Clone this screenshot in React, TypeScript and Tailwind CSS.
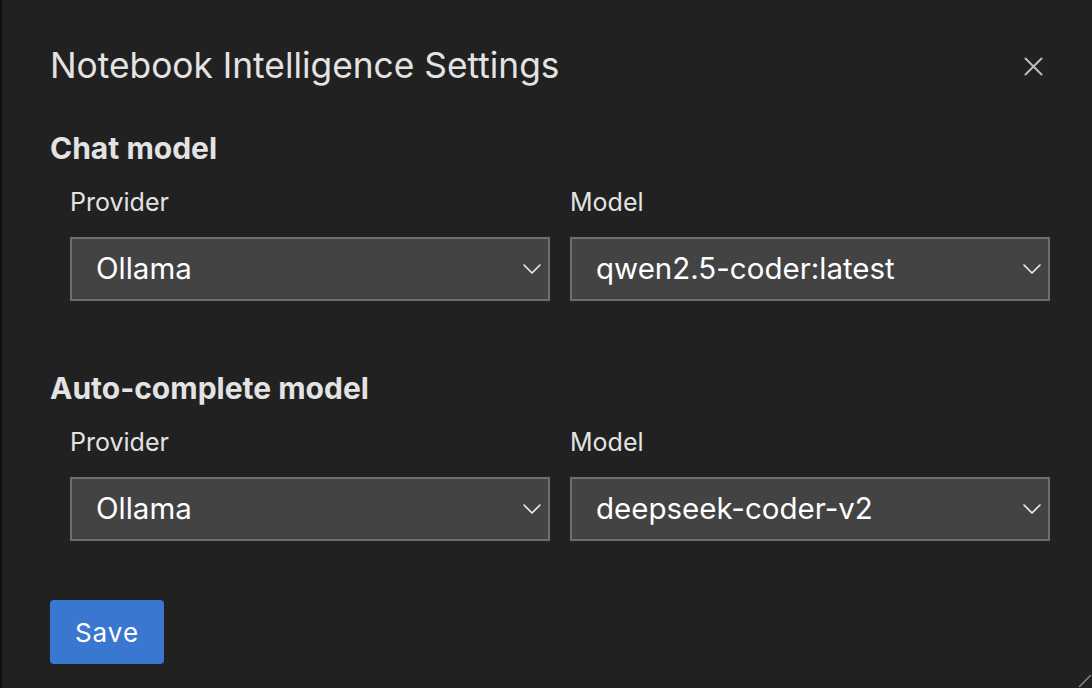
import { useState } from "react";

type ModelSection = {
  title: string;
  provider: string;
  model: string;
};

const SECTIONS: ModelSection[] = [
  { title: "Chat model", provider: "Ollama", model: "qwen2.5-coder:latest" },
  { title: "Auto-complete model", provider: "Ollama", model: "deepseek-coder-v2" },
];

function Chevron() {
  return (
    <svg width="18" height="10" viewBox="0 0 18 10" fill="none" className="shrink-0">
      <path d="M1 1l8 8 8-8" stroke="#f2f2f2" strokeWidth="1.6" strokeLinecap="round" strokeLinejoin="round" />
    </svg>
  );
}

function SelectBox({ value }: { value: string }) {
  return (
    <div className="flex h-[64px] items-center justify-between border-2 border-[#6e6e6e] bg-[#434343] pl-[24px] pr-[7px]">
      <span className="text-[29.5px] leading-none text-white">{value}</span>
      <Chevron />
    </div>
  );
}

function Section({ section, first }: { section: ModelSection; first: boolean }) {
  return (
    <section className={first ? "mt-[40px]" : "mt-[71px]"}>
      <h2 className="h-[33px] text-[30px] font-bold leading-[33px] text-[#e3e3e3]">{section.title}</h2>
      <div className="mt-[24px] grid grid-cols-2 gap-[20px] pl-[20px]">
        <div>
          <p className="h-[27px] text-[25px] leading-[27px] text-[#e3e3e3]">Provider</p>
          <div className="mt-[21px]">
            <SelectBox value={section.provider} />
          </div>
        </div>
        <div>
          <p className="h-[27px] text-[25px] leading-[27px] text-[#e3e3e3]">Model</p>
          <div className="mt-[21px]">
            <SelectBox value={section.model} />
          </div>
        </div>
      </div>
    </section>
  );
}

export default function App() {
  const [saved, setSaved] = useState(false);

  return (
    <div
      className="relative h-[688px] w-[1092px] overflow-hidden border-l-2 border-[#111111] bg-[#212121] pl-[48px] pr-[42px] pt-[40px]"
      style={{ fontFamily: "Inter, 'Noto Sans', sans-serif" }}
    >
      <header className="flex h-[52px] items-center justify-between">
        <h1 className="text-[35.3px] leading-[52px] text-[#e3e3e3]">Notebook Intelligence Settings</h1>
        <button className="mr-[7px] flex h-[20px] w-[20px] items-center justify-center">
          <svg width="19" height="19" viewBox="0 0 19 19" fill="none">
            <path d="M1.5 1.5l16 16M17.5 1.5l-16 16" stroke="#bdbdbd" strokeWidth="2" strokeLinecap="round" />
          </svg>
        </button>
      </header>

      {SECTIONS.map((s, i) => (
        <Section key={s.title} section={s} first={i === 0} />
      ))}

      <button
        onClick={() => setSaved(!saved)}
        className="mt-[59px] flex h-[64px] w-[114px] items-center justify-center rounded-[4px] bg-[#3a77d0] text-[26px] tracking-[1px] text-white"
      >
        Save
      </button>

      <svg className="absolute bottom-0 right-0" width="14" height="14" viewBox="0 0 14 14" fill="none">
        <path d="M13 1L1 13" stroke="#8a8a8a" strokeWidth="1.5" />
      </svg>
    </div>
  );
}
